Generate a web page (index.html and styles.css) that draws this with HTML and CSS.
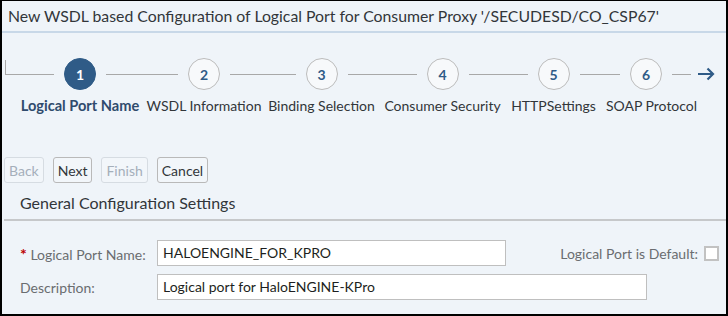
FILE: index.html
```html
<!DOCTYPE html>
<html>
<head>
<meta charset="utf-8">
<link rel="stylesheet" href="styles.css">
</head>
<body>
<div class="frame">
  <div class="title">New WSDL based Configuration of Logical Port for Consumer Proxy '/SECUDESD/CO_CSP67'</div>
  <div class="roadmap">
    <div class="start"></div>
    <div class="step s1 current">
      <div class="node"><span class="line"></span><span class="circle">1</span><span class="line"></span></div>
      <div class="label">Logical Port Name</div>
    </div>
    <div class="step s2">
      <div class="node"><span class="line"></span><span class="circle">2</span><span class="line"></span></div>
      <div class="label">WSDL Information</div>
    </div>
    <div class="step s3">
      <div class="node"><span class="line"></span><span class="circle">3</span><span class="line"></span></div>
      <div class="label">Binding Selection</div>
    </div>
    <div class="step s4">
      <div class="node"><span class="line"></span><span class="circle">4</span><span class="line"></span></div>
      <div class="label">Consumer Security</div>
    </div>
    <div class="step s5">
      <div class="node"><span class="line"></span><span class="circle">5</span><span class="line"></span></div>
      <div class="label">HTTPSettings</div>
    </div>
    <div class="step s6 last">
      <div class="node"><span class="line"></span><span class="circle">6</span><span class="line"></span></div>
      <div class="label">SOAP Protocol</div>
    </div>
    <div class="end">
      <svg width="18" height="14" viewBox="0 0 18 14"><path d="M1 7H16M10.5 1.5L16 7L10.5 12.5" fill="none" stroke="#2f5b87" stroke-width="2.2"/></svg>
    </div>
  </div>
  <div class="toolbar">
    <button class="btn disabled">Back</button>
    <button class="btn">Next</button>
    <button class="btn disabled">Finish</button>
    <button class="btn">Cancel</button>
  </div>
  <div class="section">General Configuration Settings</div>
  <div class="form">
    <div class="row">
      <label class="flabel"><span class="req">*</span> Logical Port Name:</label>
      <div class="input w1">HALOENGINE_FOR_KPRO</div>
      <div class="spacer"></div>
      <label class="flabel right">Logical Port is Default:</label>
      <span class="check"></span>
    </div>
    <div class="row">
      <label class="flabel">Description:</label>
      <div class="input w2">Logical port for HaloENGINE-KPro</div>
    </div>
  </div>
</div>
</body>
</html>
```

FILE: styles.css
```css
html, body {
  margin: 0;
  padding: 0;
}
body {
  font-family: Lato, "Liberation Sans", sans-serif;
  color: #32363a;
  background: #eff4f9;
}
.frame {
  width: 728px;
  height: 316px;
  box-sizing: border-box;
  border-style: solid;
  border-color: #000;
  border-width: 1px 2px 2px 2px;
  background: #eff4f9;
  overflow: hidden;
}
.title {
  height: 30px;
  line-height: 30px;
  padding-left: 6px;
  font-size: 15.8px;
  color: #32363a;
  border-bottom: 2px solid #c8d8e8;
  white-space: nowrap;
}
.roadmap {
  display: flex;
  align-items: flex-start;
  padding-top: 25px;
  margin-left: 3px;
}
.start {
  width: 11px;
  height: 32px;
  position: relative;
  flex: none;
}
.start::before {
  content: "";
  position: absolute;
  left: 0;
  top: 2px;
  width: 1px;
  height: 15px;
  background: #a8a8a8;
}
.start::after {
  content: "";
  position: absolute;
  left: 0;
  right: 0;
  top: 16px;
  height: 1px;
  background: #a8a8a8;
}
.step {
  display: flex;
  flex-direction: column;
  align-items: center;
  flex: none;
}
.s1 { width: 128px; }
.s2 { width: 120px; }
.s3 { width: 115px; }
.s4 { width: 127px; }
.s5 { width: 95px; }
.s6 { width: 101px; }
.node {
  display: flex;
  align-items: center;
  width: 100%;
  height: 32px;
}
.line {
  flex: 1;
  height: 1px;
  background: #a8a8a8;
}
.last .line:last-child {
  margin-right: 11px;
}
.circle {
  width: 30px;
  height: 30px;
  border-radius: 50%;
  border: 1px solid #bcbcbc;
  background: #f7f9fb;
  margin: 0 10px;
  display: flex;
  align-items: center;
  justify-content: center;
  font-size: 14px;
  font-weight: bold;
  color: #2f5b87;
  flex: none;
}
.current .circle {
  background: #2f5b87;
  border-color: #2f5b87;
  color: #fff;
}
.label {
  margin-top: 7px;
  font-size: 14px;
  line-height: 18px;
  white-space: nowrap;
  color: #32363a;
}
.current .label {
  font-weight: bold;
  font-size: 14.6px;
  color: #2f4b6d;
}
.end {
  margin-left: -5px;
  height: 32px;
  display: flex;
  align-items: center;
}
.end svg {
  display: block;
}
.toolbar {
  display: flex;
  gap: 9px;
  margin-top: 42px;
  padding-left: 2px;
}
.btn {
  font-family: inherit;
  font-size: 14px;
  height: 26px;
  margin: 0;
  padding: 0 4px;
  border: 1px solid #b9b9b9;
  border-radius: 3px;
  background: #f2f6fa;
  color: #32363a;
}
.btn.disabled {
  border-color: #d6dce2;
  color: #a5afba;
}
.section {
  margin-left: 2px;
  padding: 11px 0 7px 16px;
  font-size: 16px;
  line-height: 18px;
  border-bottom: 2px solid #c6c8ca;
}
.form {
  margin-top: 19px;
  display: flex;
  flex-direction: column;
  gap: 8px;
  padding-left: 18px;
  padding-right: 7px;
}
.row {
  display: flex;
  align-items: center;
}
.flabel {
  width: 137px;
  font-size: 14px;
  color: #6a6d70;
  white-space: nowrap;
  flex: none;
}
.flabel.right {
  width: auto;
}
.req {
  color: #bb0000;
  font-weight: bold;
  font-size: 16px;
}
.input {
  border: 1px solid #bfbfbf;
  background: #fff;
  padding-left: 5px;
  font-size: 14px;
  line-height: 24px;
  color: #1d1f21;
  box-sizing: border-box;
  height: 26px;
}
.w1 { width: 349px; }
.w2 { width: 490px; }
.spacer { flex: 1; }
.check {
  width: 15px;
  height: 15px;
  box-sizing: border-box;
  border: 2px solid #c2c2c2;
  background: #fff;
  margin-left: 6px;
  flex: none;
}
```
